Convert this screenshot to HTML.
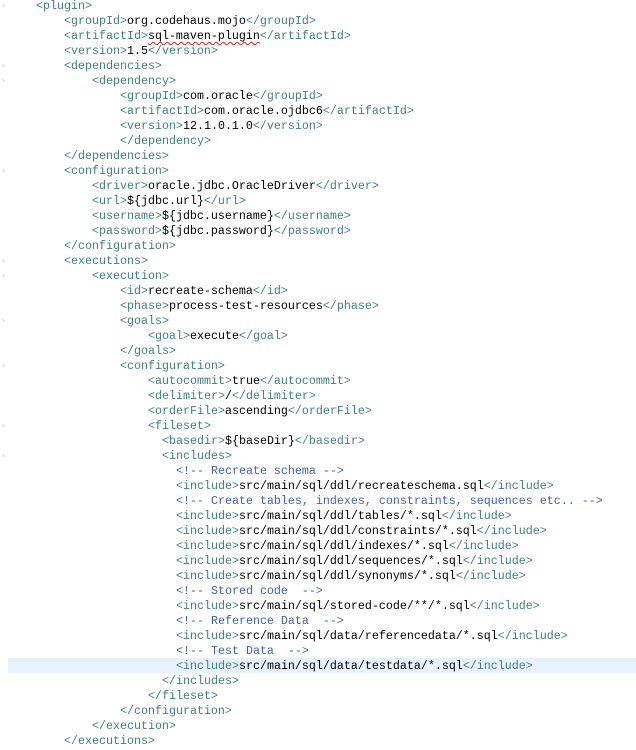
<!DOCTYPE html>
<html><head><meta charset="utf-8"><style>
html,body{margin:0;padding:0;background:#fff;width:636px;height:750px;overflow:hidden;position:relative;font-family:"Liberation Mono","DejaVu Sans Mono",monospace}
.l{position:absolute;height:15px;line-height:15px;white-space:pre;font-family:"Liberation Mono","DejaVu Sans Mono",monospace;font-size:11.67px;color:#000}
.t{color:#3f7f7f}.c{color:#3f5fbf}
.hl{position:absolute;left:8px;top:658px;width:628px;height:15px;background:#e8f2fe}
.sq{text-decoration:underline wavy #e02020;text-decoration-thickness:1px;text-underline-offset:2px}
.g{position:absolute;left:2px;width:4px;height:6px;color:#b0b8c8;font-size:8px;line-height:6px;font-family:"DejaVu Sans",sans-serif}
</style></head><body>
<div class="hl"></div>
<div class="g" style="top:3px">›</div>
<div class="g" style="top:63px">›</div>
<div class="g" style="top:78px">›</div>
<div class="g" style="top:168px">›</div>
<div class="g" style="top:258px">›</div>
<div class="g" style="top:273px">›</div>
<div class="g" style="top:318px">›</div>
<div class="g" style="top:363px">›</div>
<div class="g" style="top:423px">›</div>
<div class="g" style="top:453px">›</div>
<div class="l" style="left:36px;top:-1px"><span class="t">&lt;plugin&gt;</span></div>
<div class="l" style="left:64px;top:14px"><span class="t">&lt;groupId&gt;</span>org.codehaus.mojo<span class="t">&lt;/groupId&gt;</span></div>
<div class="l" style="left:64px;top:29px"><span class="t">&lt;artifactId&gt;</span><span class="sq">sql-maven-plugin</span><span class="t">&lt;/artifactId&gt;</span></div>
<div class="l" style="left:64px;top:44px"><span class="t">&lt;version&gt;</span>1.5<span class="t">&lt;/version&gt;</span></div>
<div class="l" style="left:64px;top:59px"><span class="t">&lt;dependencies&gt;</span></div>
<div class="l" style="left:92px;top:74px"><span class="t">&lt;dependency&gt;</span></div>
<div class="l" style="left:120px;top:89px"><span class="t">&lt;groupId&gt;</span>com.oracle<span class="t">&lt;/groupId&gt;</span></div>
<div class="l" style="left:120px;top:104px"><span class="t">&lt;artifactId&gt;</span>com.oracle.ojdbc6<span class="t">&lt;/artifactId&gt;</span></div>
<div class="l" style="left:120px;top:119px"><span class="t">&lt;version&gt;</span>12.1.0.1.0<span class="t">&lt;/version&gt;</span></div>
<div class="l" style="left:120px;top:134px"><span class="t">&lt;/dependency&gt;</span></div>
<div class="l" style="left:64px;top:149px"><span class="t">&lt;/dependencies&gt;</span></div>
<div class="l" style="left:64px;top:164px"><span class="t">&lt;configuration&gt;</span></div>
<div class="l" style="left:92px;top:179px"><span class="t">&lt;driver&gt;</span>oracle.jdbc.OracleDriver<span class="t">&lt;/driver&gt;</span></div>
<div class="l" style="left:92px;top:194px"><span class="t">&lt;url&gt;</span>${jdbc.url}<span class="t">&lt;/url&gt;</span></div>
<div class="l" style="left:92px;top:209px"><span class="t">&lt;username&gt;</span>${jdbc.username}<span class="t">&lt;/username&gt;</span></div>
<div class="l" style="left:92px;top:224px"><span class="t">&lt;password&gt;</span>${jdbc.password}<span class="t">&lt;/password&gt;</span></div>
<div class="l" style="left:64px;top:239px"><span class="t">&lt;/configuration&gt;</span></div>
<div class="l" style="left:64px;top:254px"><span class="t">&lt;executions&gt;</span></div>
<div class="l" style="left:92px;top:269px"><span class="t">&lt;execution&gt;</span></div>
<div class="l" style="left:120px;top:284px"><span class="t">&lt;id&gt;</span>recreate-schema<span class="t">&lt;/id&gt;</span></div>
<div class="l" style="left:120px;top:299px"><span class="t">&lt;phase&gt;</span>process-test-resources<span class="t">&lt;/phase&gt;</span></div>
<div class="l" style="left:120px;top:314px"><span class="t">&lt;goals&gt;</span></div>
<div class="l" style="left:148px;top:329px"><span class="t">&lt;goal&gt;</span>execute<span class="t">&lt;/goal&gt;</span></div>
<div class="l" style="left:120px;top:344px"><span class="t">&lt;/goals&gt;</span></div>
<div class="l" style="left:120px;top:359px"><span class="t">&lt;configuration&gt;</span></div>
<div class="l" style="left:148px;top:374px"><span class="t">&lt;autocommit&gt;</span>true<span class="t">&lt;/autocommit&gt;</span></div>
<div class="l" style="left:148px;top:389px"><span class="t">&lt;delimiter&gt;</span>/<span class="t">&lt;/delimiter&gt;</span></div>
<div class="l" style="left:148px;top:404px"><span class="t">&lt;orderFile&gt;</span>ascending<span class="t">&lt;/orderFile&gt;</span></div>
<div class="l" style="left:148px;top:419px"><span class="t">&lt;fileset&gt;</span></div>
<div class="l" style="left:162px;top:434px"><span class="t">&lt;basedir&gt;</span>${baseDir}<span class="t">&lt;/basedir&gt;</span></div>
<div class="l" style="left:162px;top:449px"><span class="t">&lt;includes&gt;</span></div>
<div class="l c" style="left:176px;top:464px">&lt;!-- Recreate schema --&gt;</div>
<div class="l" style="left:176px;top:479px"><span class="t">&lt;include&gt;</span>src/main/sql/ddl/recreateschema.sql<span class="t">&lt;/include&gt;</span></div>
<div class="l c" style="left:176px;top:494px">&lt;!-- Create tables, indexes, constraints, sequences etc.. --&gt;</div>
<div class="l" style="left:176px;top:509px"><span class="t">&lt;include&gt;</span>src/main/sql/ddl/tables/*.sql<span class="t">&lt;/include&gt;</span></div>
<div class="l" style="left:176px;top:524px"><span class="t">&lt;include&gt;</span>src/main/sql/ddl/constraints/*.sql<span class="t">&lt;/include&gt;</span></div>
<div class="l" style="left:176px;top:539px"><span class="t">&lt;include&gt;</span>src/main/sql/ddl/indexes/*.sql<span class="t">&lt;/include&gt;</span></div>
<div class="l" style="left:176px;top:554px"><span class="t">&lt;include&gt;</span>src/main/sql/ddl/sequences/*.sql<span class="t">&lt;/include&gt;</span></div>
<div class="l" style="left:176px;top:569px"><span class="t">&lt;include&gt;</span>src/main/sql/ddl/synonyms/*.sql<span class="t">&lt;/include&gt;</span></div>
<div class="l c" style="left:176px;top:584px">&lt;!-- Stored code  --&gt;</div>
<div class="l" style="left:176px;top:599px"><span class="t">&lt;include&gt;</span>src/main/sql/stored-code/**/*.sql<span class="t">&lt;/include&gt;</span></div>
<div class="l c" style="left:176px;top:614px">&lt;!-- Reference Data  --&gt;</div>
<div class="l" style="left:176px;top:629px"><span class="t">&lt;include&gt;</span>src/main/sql/data/referencedata/*.sql<span class="t">&lt;/include&gt;</span></div>
<div class="l c" style="left:176px;top:644px">&lt;!-- Test Data  --&gt;</div>
<div class="l" style="left:176px;top:659px"><span class="t">&lt;include&gt;</span>src/main/sql/data/testdata/*.sql<span class="t">&lt;/include&gt;</span></div>
<div class="l" style="left:162px;top:674px"><span class="t">&lt;/includes&gt;</span></div>
<div class="l" style="left:148px;top:689px"><span class="t">&lt;/fileset&gt;</span></div>
<div class="l" style="left:120px;top:704px"><span class="t">&lt;/configuration&gt;</span></div>
<div class="l" style="left:92px;top:719px"><span class="t">&lt;/execution&gt;</span></div>
<div class="l" style="left:64px;top:734px"><span class="t">&lt;/executions&gt;</span></div>
</body></html>
